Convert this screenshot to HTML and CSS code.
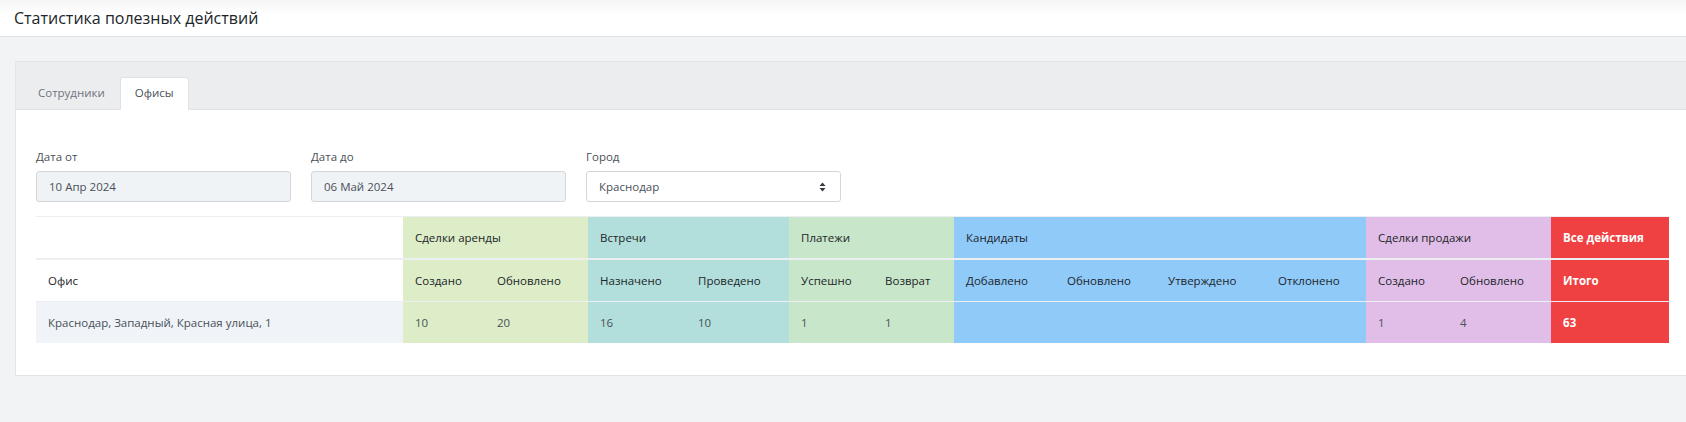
FILE: index.html
```html
<!DOCTYPE html>
<html>
	<head>
		<meta charset="utf-8">
		<title>Статистика полезных действий</title>
		<link rel="stylesheet" href="styles.css">
	</head>
	<body>
		<header class="topbar">
			<h1 class="page-title">Статистика полезных действий</h1>
		</header>
		<main class="content">
			<div class="card">
				<div class="card-header">
					<ul class="tabs">
						<li class="tab">Сотрудники</li>
						<li class="tab active">Офисы</li>
					</ul>
				</div>
				<div class="card-body">
					<div class="filters">
						<div class="field">
							<label for="date-from">Дата от</label>
							<input id="date-from" class="input" type="text" value="10 Апр 2024" readonly>
						</div>
						<div class="field">
							<label for="date-to">Дата до</label>
							<input id="date-to" class="input" type="text" value="06 Май 2024" readonly>
						</div>
						<div class="field">
							<label>Город</label>
							<div class="input select">
								<span>Краснодар</span>
								<svg class="caret" width="7" height="10" viewBox="0 0 7 10">
									<path d="M3.5 0.5 L6.5 4 L0.5 4 Z" fill="#343a40"/>
									<path d="M0.5 6 L6.5 6 L3.5 9.5 Z" fill="#343a40"/>
								</svg>
							</div>
						</div>
					</div>

					<table class="stats">
						<colgroup>
							<col class="w-office">
							<col class="w-82"><col class="w-103">
							<col class="w-98"><col class="w-103">
							<col class="w-84"><col class="w-81">
							<col class="w-101"><col class="w-101"><col class="w-110"><col class="w-100">
							<col class="w-82"><col class="w-103">
							<col class="w-118">
						</colgroup>
						<thead>
							<tr class="groups">
								<th></th>
								<th colspan="2" class="rent">Сделки аренды</th>
								<th colspan="2" class="meet">Встречи</th>
								<th colspan="2" class="pay">Платежи</th>
								<th colspan="4" class="cand">Кандидаты</th>
								<th colspan="2" class="sale">Сделки продажи</th>
								<th class="total">Все действия</th>
							</tr>
							<tr class="subs">
								<th>Офис</th>
								<th class="rent">Создано</th>
								<th class="rent">Обновлено</th>
								<th class="meet">Назначено</th>
								<th class="meet">Проведено</th>
								<th class="pay">Успешно</th>
								<th class="pay">Возврат</th>
								<th class="cand">Добавлено</th>
								<th class="cand">Обновлено</th>
								<th class="cand">Утверждено</th>
								<th class="cand">Отклонено</th>
								<th class="sale">Создано</th>
								<th class="sale">Обновлено</th>
								<th class="total">Итого</th>
							</tr>
						</thead>
						<tbody>
							<tr>
								<td class="office">Краснодар, Западный, Красная улица, 1</td>
								<td class="rent">10</td>
								<td class="rent">20</td>
								<td class="meet">16</td>
								<td class="meet">10</td>
								<td class="pay">1</td>
								<td class="pay">1</td>
								<td class="cand"></td>
								<td class="cand"></td>
								<td class="cand"></td>
								<td class="cand"></td>
								<td class="sale">1</td>
								<td class="sale">4</td>
								<td class="total">63</td>
							</tr>
						</tbody>
					</table>
				</div>
			</div>
		</main>
	</body>
</html>
```

FILE: styles.css
```css
html,
body {
	overflow-x: hidden;
}
body {
	margin: 0;
	background: #f2f3f5;
	color: #495057;
	font-family: "Open Sans", "Liberation Sans", sans-serif;
	font-size: 11.5px;
	line-height: 18px;
}

/* top bar */
.topbar {
	height: 36px;
	display: flex;
	align-items: center;
	padding: 0 14px;
	background: linear-gradient(#f5f5f5, #ffffff 14px);
	border-bottom: 1px solid #dfe2e6;
}
.page-title {
	margin: 0;
	font-size: 16px;
	font-weight: 500;
	color: #212529;
}

.content {
	padding: 24px 0 0 15px;
}

/* card with tabs */
.card {
	width: 1675px;
	background: #fff;
	border: 1px solid #e1e4e8;
	border-right: 0;
}
.card-header {
	padding: 15px 7px 0;
	background: #ecedef;
	border-bottom: 1px solid #dee2e6;
}
.tabs {
	display: flex;
	margin: 0 0 -1px;
	padding: 0;
	list-style: none;
}
.tab {
	padding: 6px 14px 7px;
	color: #6c757d;
	border: 1px solid transparent;
	border-radius: 3px 3px 0 0;
}
.tab.active {
	background: #fff;
	color: #495057;
	border-color: #dee2e6 #dee2e6 #fff;
}
.card-body {
	padding: 38px 20px 32px;
}

/* filters */
.filters {
	display: grid;
	grid-template-columns: repeat(3, 255px);
	column-gap: 20px;
	margin-bottom: 14px;
}
.field label {
	display: block;
	margin-bottom: 5px;
	color: #495057;
}
.input {
	box-sizing: border-box;
	width: 100%;
	height: 31px;
	padding: 0 12px;
	font: inherit;
	color: #495057;
	background: #f0f3f6;
	border: 1px solid #d3d7dc;
	border-radius: 3px;
	outline: none;
}
.select {
	display: flex;
	align-items: center;
	justify-content: space-between;
	padding-right: 14px;
	background: #fff;
}

/* stats table */
.stats {
	width: 1633px;
	table-layout: fixed;
	border-collapse: collapse;
}
.w-office { width: 367px; }
.w-81 { width: 81px; }
.w-82 { width: 82px; }
.w-84 { width: 84px; }
.w-98 { width: 98px; }
.w-100 { width: 100px; }
.w-101 { width: 101px; }
.w-103 { width: 103px; }
.w-110 { width: 110px; }
.w-118 { width: 118px; }

.stats th,
.stats td {
	padding: 12px 12px 11px;
	text-align: left;
	vertical-align: middle;
	border-top: 1px solid #eceef1;
	white-space: nowrap;
}
.stats th {
	font-weight: 500;
	color: #212529;
}
.stats .groups th {
	border-bottom: 2px solid #eceef1;
}
.stats td.office {
	background: #f0f3f7;
}
.rent { background: #dcedc8; }
.meet { background: #b2dfdb; }
.pay { background: #c8e6c9; }
.cand { background: #90caf9; }
.sale { background: #e1bee7; }
.stats .total {
	background: #ef4141;
	color: #fff;
	font-weight: 700;
}
```
